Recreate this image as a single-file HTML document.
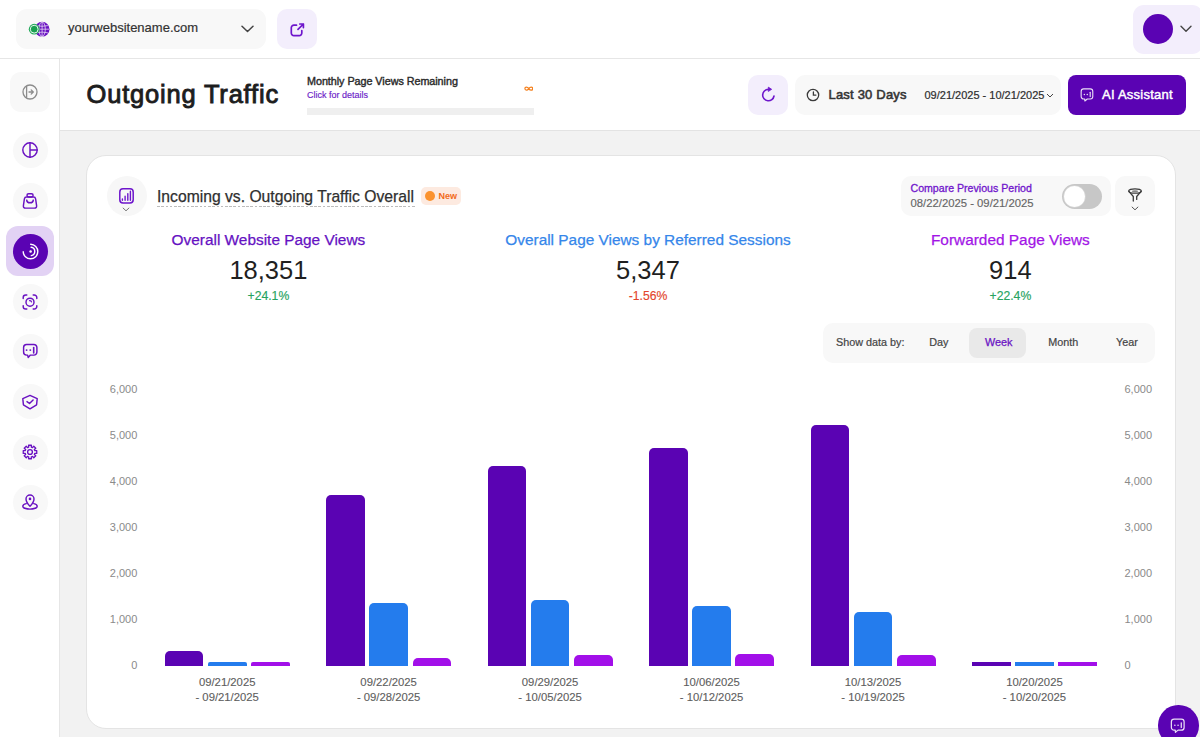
<!DOCTYPE html>
<html>
<head>
<meta charset="utf-8">
<style>
*{box-sizing:border-box;margin:0;padding:0}
html,body{width:1200px;height:737px;overflow:hidden;background:#f2f2f2;font-family:"Liberation Sans",sans-serif;color:#222}
.abs{position:absolute}
#top{position:absolute;left:0;top:0;width:1200px;height:59px;background:#fff;border-bottom:1px solid #e6e6e6}
#side{position:absolute;left:0;top:59px;width:60px;height:678px;background:#fff;border-right:1px solid #e6e6e6}
#ph{position:absolute;left:60px;top:59px;width:1140px;height:72px;background:#fff;border-bottom:1px solid #e3e3e3}
.sel{left:16px;top:9px;width:250px;height:40px;background:#f8f8f8;border-radius:11px}
.lbtn{background:#f3eefc;border-radius:10px}
.gbtn{background:#f8f8f8;border-radius:10px}
.sicon{position:absolute;left:12.5px;width:35px;height:35px;border-radius:50%;background:#f8f8f8}
.sicon svg{position:absolute;left:8.5px;top:8.5px}
#card{position:absolute;left:86px;top:155px;width:1090px;height:574px;background:#fff;border:1px solid #e4e4e4;border-radius:20px}
.t{position:absolute;white-space:nowrap;line-height:1}
.ylab{position:absolute;font-size:11px;color:#8a8a8a;line-height:1;white-space:nowrap}
.bar{position:absolute;border-radius:5px 5px 0 0}
.p{background:#5a03b3}.b{background:#247ced}.m{background:#a20fe9}
.xl{position:absolute;width:120px;text-align:center;font-size:11.3px;color:#5e5e5e;line-height:15px;-webkit-text-stroke:0.12px #5e5e5e}
</style>
</head>
<body>
<div id="top">
  <div class="abs sel">
    <svg class="abs" style="left:8px;top:11px" width="28" height="18" viewBox="0 0 28 18"><circle cx="18.1" cy="9.2" r="7.4" fill="#6a12c2"/><g stroke="#fff" stroke-width="0.75" fill="none" opacity="0.85"><ellipse cx="18.1" cy="9.2" rx="3.2" ry="7.2"/><line x1="18.1" y1="2" x2="18.1" y2="16.4"/><line x1="11.2" y1="9.2" x2="25" y2="9.2"/><path d="M12.3 5.6 Q18.1 7 23.9 5.6 M12.3 12.8 Q18.1 11.4 23.9 12.8"/></g><circle cx="10.2" cy="9.2" r="5.4" fill="#22a95a"/><circle cx="10.2" cy="9.2" r="3.9" fill="none" stroke="#e8f6ee" stroke-width="1"/><circle cx="10.2" cy="9.2" r="2.9" fill="#1a9f50"/></svg>
    <div class="t" style="left:52px;top:12px;font-size:13px;color:#333;-webkit-text-stroke:0.2px #333">yourwebsitename.com</div>
    <svg class="abs" style="left:225px;top:16px" width="13" height="8" viewBox="0 0 13 8"><path d="M1 1.2 L6.5 6.5 L12 1.2" stroke="#444" stroke-width="1.5" fill="none" stroke-linecap="round" stroke-linejoin="round"/></svg>
  </div>
  <div class="abs lbtn" style="left:277px;top:9px;width:40px;height:40px">
    <svg class="abs" style="left:12.5px;top:13.7px" width="15" height="14" viewBox="0 0 15 14"><path d="M6.5 2.2 H4 A2.6 2.6 0 0 0 1.3 4.8 V10 A2.6 2.6 0 0 0 4 12.7 H9.2 A2.6 2.6 0 0 0 11.8 10 V7.6 M8 6.3 L13.4 1 M9.8 1 H13.4 V4.6" stroke="#6e16cc" stroke-width="1.7" fill="none" stroke-linecap="round" stroke-linejoin="round"/></svg>
  </div>
  <div class="abs lbtn" style="left:1133px;top:5px;width:70px;height:49px;border-radius:11px">
    <div class="abs" style="left:10px;top:9px;width:30px;height:30px;border-radius:50%;background:#5a03b3"></div>
    <svg class="abs" style="left:47px;top:20px" width="12" height="8" viewBox="0 0 12 8"><path d="M1 1.3 L6 6.3 L11 1.3" stroke="#444" stroke-width="1.4" fill="none" stroke-linecap="round" stroke-linejoin="round"/></svg>
  </div>
</div>

<div id="side">
  <div class="abs gbtn" style="left:10px;top:13px;width:40px;height:40px;border-radius:11px">
    <svg class="abs" style="left:12px;top:12px" width="16" height="16" viewBox="0 0 16 16"><circle cx="8" cy="8" r="7" stroke="#8c8c8c" stroke-width="1.3" fill="none"/><path d="M4.6 1.9 V14.1" stroke="#8c8c8c" stroke-width="1.3"/><path d="M7 8 H11.2 M9.2 5.9 L11.3 8 L9.2 10.1" stroke="#8c8c8c" stroke-width="1.3" fill="none" stroke-linecap="round" stroke-linejoin="round"/></svg>
  </div>
  <div class="sicon" style="top:73.8px"><svg width="18" height="18" viewBox="0 0 18 18"><circle cx="9" cy="9" r="7.2" stroke="#6a12c2" stroke-width="1.45" fill="none" stroke-linecap="round" stroke-linejoin="round"/><path d="M9 1.8 V16.2 M9 9 H16.2" stroke="#6a12c2" stroke-width="1.45" fill="none" stroke-linecap="round" stroke-linejoin="round"/></svg></div>
  <div class="sicon" style="top:124.3px"><svg width="18" height="18" viewBox="0 0 18 18"><rect x="6" y="1.7" width="6.1" height="3.2" rx="1.6" stroke="#6a12c2" stroke-width="1.45" fill="none" stroke-linecap="round" stroke-linejoin="round"/><path d="M5.6 5 H12.5 Q14.3 5 14.6 6.8 L15.6 13.6 Q15.9 16.1 13.4 16.1 H4.6 Q2.1 16.1 2.4 13.6 L3.4 6.8 Q3.7 5 5.6 5 Z" stroke="#6a12c2" stroke-width="1.45" fill="none" stroke-linecap="round" stroke-linejoin="round"/><path d="M5.7 8.1 Q5.9 10.8 9 10.8 Q12.1 10.8 12.3 8.1" stroke="#6a12c2" stroke-width="1.45" fill="none" stroke-linecap="round" stroke-linejoin="round"/></svg></div>
  <div class="abs" style="left:6px;top:167px;width:48px;height:50px;border-radius:12px;background:#e2d2f4"></div>
  <div class="abs" style="left:12.5px;top:174.5px;width:35px;height:35px;border-radius:50%;background:#5a03b3">
    <svg class="abs" style="left:8px;top:8px" width="19" height="19" viewBox="0 0 19 19"><path d="M9.7 2.2 A7.3 7.3 0 1 1 2.2 9.7" stroke="#fff" stroke-width="1.4" fill="none" stroke-linecap="round"/><path d="M10.1 5.3 A4.2 4.2 0 0 1 10.3 13.6" stroke="#fff" stroke-width="1.4" fill="none" stroke-linecap="round"/><circle cx="9.6" cy="9.6" r="1.25" fill="#fff"/></svg>
  </div>
  <div class="sicon" style="top:225.2px"><svg width="18" height="18" viewBox="0 0 18 18"><path d="M2.2 5.4 V4.6 A2.6 2.6 0 0 1 4.8 2 H5.8 M12.2 2 H13.2 A2.6 2.6 0 0 1 15.8 4.6 V5.4 M15.8 12.6 V13.4 A2.6 2.6 0 0 1 13.2 16 H12.2 M5.8 16 H4.8 A2.6 2.6 0 0 1 2.2 13.4 V12.6" stroke="#6a12c2" stroke-width="1.45" fill="none" stroke-linecap="round" stroke-linejoin="round"/><circle cx="9" cy="9.2" r="4" stroke="#6a12c2" stroke-width="1.45" fill="none" stroke-linecap="round" stroke-linejoin="round"/><path d="M8.6 7.6 A1.7 1.7 0 0 1 10.5 8.9" stroke="#6a12c2" stroke-width="1.2" fill="none" stroke-linecap="round"/></svg></div>
  <div class="sicon" style="top:274.8px"><svg width="18" height="18" viewBox="0 0 18 18"><path d="M5.6 2.5 H12.9 A3 3 0 0 1 15.9 5.5 V10.1 A3 3 0 0 1 12.9 13.1 H9.4 L7.2 15.4 L6.6 13.1 H5.6 A3 3 0 0 1 2.6 10.1 V5.5 A3 3 0 0 1 5.6 2.5Z" stroke="#6a12c2" stroke-width="1.45" fill="none" stroke-linecap="round" stroke-linejoin="round"/><circle cx="5.6" cy="8.1" r="0.95" fill="#6a12c2"/><circle cx="9.3" cy="8.1" r="0.95" fill="#6a12c2"/><path d="M12.7 5.6 V10.9" stroke="#6a12c2" stroke-width="1.6" stroke-linecap="round"/></svg></div>
  <div class="sicon" style="top:325.3px"><svg width="18" height="18" viewBox="0 0 18 18"><path d="M9 2.4 L16.2 5.6 L15.6 11.8 L9 15.8 L2.4 11.8 L1.8 5.6 Z" stroke="#6a12c2" stroke-width="1.45" fill="none" stroke-linecap="round" stroke-linejoin="round"/><path d="M6 8.6 L8.5 10.5 L12.1 6.9" stroke="#6a12c2" stroke-width="1.45" fill="none" stroke-linecap="round" stroke-linejoin="round"/></svg></div>
  <div class="sicon" style="top:375.7px"><svg width="18" height="18" viewBox="0 0 18 18"><path d="M7.71 4.17 L7.57 2.25 L10.43 2.25 L10.29 4.17 L10.91 4.38 L11.50 4.67 L12.76 3.21 L14.79 5.24 L13.33 6.50 L13.62 7.09 L13.83 7.71 L15.75 7.57 L15.75 10.43 L13.83 10.29 L13.62 10.91 L13.33 11.50 L14.79 12.76 L12.76 14.79 L11.50 13.33 L10.91 13.62 L10.29 13.83 L10.43 15.75 L7.57 15.75 L7.71 13.83 L7.09 13.62 L6.50 13.33 L5.24 14.79 L3.21 12.76 L4.67 11.50 L4.38 10.91 L4.17 10.29 L2.25 10.43 L2.25 7.57 L4.17 7.71 L4.38 7.09 L4.67 6.50 L3.21 5.24 L5.24 3.21 L6.50 4.67 L7.09 4.38Z" stroke="#6a12c2" stroke-width="1.3" fill="none" stroke-linejoin="round"/><circle cx="9" cy="9" r="2.4" stroke="#6a12c2" stroke-width="1.35" fill="none"/></svg></div>
  <div class="sicon" style="top:425.9px"><svg width="18" height="18" viewBox="0 0 18 18"><path d="M9 13.3 C6.6 10.8 5 8.6 5 6 A4 4 0 0 1 13 6 C13 8.6 11.4 10.8 9 13.3Z" stroke="#6a12c2" stroke-width="1.45" fill="none" stroke-linecap="round" stroke-linejoin="round"/><circle cx="9" cy="5.9" r="1.3" fill="#6a12c2"/><path d="M5.2 10.6 C3.1 11.1 1.8 12 1.8 13.2 C1.8 14.8 5 16.1 9 16.1 C13 16.1 16.2 14.8 16.2 13.2 C16.2 12 14.9 11.1 12.8 10.6" stroke="#6a12c2" stroke-width="1.45" fill="none" stroke-linecap="round" stroke-linejoin="round"/></svg></div>
</div>

<div id="ph">
  <div class="t" style="left:26.6px;top:23px;font-size:25.5px;font-weight:400;color:#1d1d1d;-webkit-text-stroke:0.9px #1d1d1d;letter-spacing:0.8px">Outgoing Traffic</div>
  <div class="t" style="left:247px;top:17px;font-size:10.8px;font-weight:400;color:#2a2a2a;-webkit-text-stroke:0.4px #2a2a2a;letter-spacing:-0.05px">Monthly Page Views Remaining</div>
  <div class="t" style="left:247px;top:32px;font-size:9px;color:#6c1bc8;-webkit-text-stroke:0.15px #6c1bc8">Click for details</div>
  <svg class="abs" style="left:463.6px;top:26.8px" width="9.6" height="5.2" viewBox="0 0 11 6"><path d="M5.5 3 C4 0.6 1 0.6 1 3 C1 5.4 4 5.4 5.5 3 C7 0.6 10 0.6 10 3 C10 5.4 7 5.4 5.5 3Z" stroke="#f4811f" stroke-width="1.4" fill="none"/></svg>
  <div class="abs" style="left:247px;top:49.2px;width:226.5px;height:6.6px;background:#efefef"></div>

  <div class="abs lbtn" style="left:688px;top:16px;width:40px;height:40px">
    <svg class="abs" style="left:12px;top:11px" width="16" height="17" viewBox="0 0 16 17"><path d="M8.3 3.4 A5.7 5.7 0 1 0 14.0 10.0" stroke="#6e16cc" stroke-width="1.6" fill="none" stroke-linecap="round"/><path d="M8.3 1.1 L11.7 3.3 L8.3 5.5 Z" fill="#6e16cc" stroke="#6e16cc" stroke-width="0.7" stroke-linejoin="round"/></svg>
  </div>
  <div class="abs gbtn" style="left:735px;top:16px;width:266px;height:40px">
    <svg class="abs" style="left:11px;top:12.5px" width="14" height="14" viewBox="0 0 14 14"><circle cx="7" cy="7" r="5.7" stroke="#3a3a3a" stroke-width="1.3" fill="none"/><path d="M7.4 4 V7.1 H9.9" stroke="#3a3a3a" stroke-width="1.3" fill="none" stroke-linecap="round"/></svg>
    <div class="t" style="left:33.5px;top:12.8px;font-size:13px;color:#333;-webkit-text-stroke:0.55px #333;letter-spacing:0.2px">Last 30 Days</div>
    <div class="t" style="left:129.5px;top:15px;font-size:11px;color:#2e2e2e;-webkit-text-stroke:0.2px #2e2e2e">09/21/2025 - 10/21/2025</div>
    <svg class="abs" style="left:251px;top:18px" width="8" height="5" viewBox="0 0 8 5"><path d="M1 1 L4 4 L7 1" stroke="#444" stroke-width="1" fill="none"/></svg>
  </div>
  <div class="abs" style="left:1008px;top:15.5px;width:118px;height:40.5px;background:#5a03b3;border-radius:8px">
    <svg class="abs" style="left:10.5px;top:12.5px;opacity:0.88" width="15.5" height="15.5" viewBox="0 0 18 18"><path d="M5.4 2.2 H13.1 A2.9 2.9 0 0 1 16 5.1 V11 A2.9 2.9 0 0 1 13.1 13.9 H9.6 L6.8 16.2 L6.6 13.9 H5.4 A2.9 2.9 0 0 1 2.5 11 V5.1 A2.9 2.9 0 0 1 5.4 2.2Z" stroke="#fff" stroke-width="1.3" fill="none" stroke-linejoin="round"/><circle cx="6.2" cy="8.7" r="0.85" fill="#fff"/><circle cx="9.6" cy="8.7" r="0.85" fill="#fff"/><path d="M13 6.2 V11" stroke="#fff" stroke-width="1.3" stroke-linecap="round"/></svg>
    <div class="t" style="left:34px;top:13.1px;font-size:13px;color:#fff;-webkit-text-stroke:0.45px #fff;letter-spacing:0.25px">AI Assistant</div>
  </div>
</div>

<div id="card">
<div class="abs" style="left:20px;top:20px;width:40px;height:40px;border-radius:50%;background:#f7f7f7"><svg class="abs" style="left:12px;top:12px" width="15" height="16" viewBox="0 0 15 16"><rect x="0.8" y="0.8" width="13.4" height="14.2" rx="3.2" stroke="#6e16cc" stroke-width="1.5" fill="none"/><path d="M3.4 12.3 V11 M6.1 12.3 V8.3 M8.8 12.3 V5.6 M11.4 12.3 V3.2" stroke="#6e16cc" stroke-width="1.4" stroke-linecap="round"/></svg><svg class="abs" style="left:15px;top:30.5px" width="8" height="5" viewBox="0 0 8 5"><path d="M0.8 0.8 L4 3.8 L7.2 0.8" stroke="#777" stroke-width="1" fill="none"/></svg></div>
<div class="t" style="left:70px;top:32.81px;font-size:15.7px;color:#2f2f2f;-webkit-text-stroke:0.25px #2f2f2f">Incoming vs. Outgoing Traffic Overall</div>
<div class="abs" style="left:69.5px;top:50px;width:258px;height:1px;background:repeating-linear-gradient(90deg,#bcbcbc 0 2.6px,transparent 2.6px 4.25px)"></div>
<div class="abs" style="left:334px;top:31px;width:40px;height:18px;border-radius:5px;background:#fdeae0"><div class="abs" style="left:3.5px;top:4px;width:10px;height:10px;border-radius:50%;background:#fb932f"></div><div class="t" style="left:17.5px;top:4.78px;font-size:9px;font-weight:700;color:#f26a1b">New</div></div>
<div class="abs" style="left:814px;top:20px;width:210px;height:40px;border-radius:10px;background:#f8f8f8"><div class="t" style="left:9.5px;top:6.73px;font-size:10.6px;color:#7015cc;-webkit-text-stroke:0.3px #7015cc">Compare Previous Period</div><div class="t" style="left:9.5px;top:21.73px;font-size:11.3px;color:#666;-webkit-text-stroke:0.15px #666">08/22/2025 - 09/21/2025</div><div class="abs" style="left:160.5px;top:7.5px;width:40px;height:25px;border-radius:13px;background:#c7c7c7"><div class="abs" style="left:2px;top:2px;width:21px;height:21px;border-radius:50%;background:#fff;box-shadow:0 0 0 0.6px #d9d9d9"></div></div></div>
<div class="abs" style="left:1028px;top:20px;width:40px;height:40px;border-radius:10px;background:#f8f8f8"><svg class="abs" style="left:12px;top:12px" width="16" height="14" viewBox="0 0 16 14"><ellipse cx="8" cy="3" rx="6.3" ry="2.2" stroke="#3a3a3a" stroke-width="1.3" fill="none"/><path d="M1.9 3.4 L6.3 8.5 V13 M14.1 3.4 L9.7 8.5 V11.4" stroke="#3a3a3a" stroke-width="1.3" fill="none" stroke-linecap="round" stroke-linejoin="round"/><ellipse cx="8" cy="3.2" rx="3.2" ry="0.9" fill="#888"/></svg><svg class="abs" style="left:16px;top:30px" width="8" height="5" viewBox="0 0 8 5"><path d="M0.8 0.8 L4 3.8 L7.2 0.8" stroke="#555" stroke-width="1" fill="none"/></svg></div>
<div class="t" style="left:-18.6px;width:400px;text-align:center;top:75.56px;font-size:15.4px;color:#6511c2;-webkit-text-stroke:0.25px #6511c2">Overall Website Page Views</div>
<div class="t" style="left:-18.6px;width:400px;text-align:center;top:102.21px;font-size:25.5px;color:#1f1f1f">18,351</div>
<div class="t" style="left:-18.6px;width:400px;text-align:center;top:134.07px;font-size:12.2px;color:#27a35e;-webkit-text-stroke:0.15px #27a35e">+24.1%</div>
<div class="t" style="left:361px;width:400px;text-align:center;top:75.56px;font-size:15.4px;color:#3586ea;-webkit-text-stroke:0.25px #3586ea">Overall Page Views by Referred Sessions</div>
<div class="t" style="left:361px;width:400px;text-align:center;top:102.21px;font-size:25.5px;color:#1f1f1f">5,347</div>
<div class="t" style="left:361px;width:400px;text-align:center;top:134.07px;font-size:12.2px;color:#e3452c;-webkit-text-stroke:0.15px #e3452c">-1.56%</div>
<div class="t" style="left:723.4px;width:400px;text-align:center;top:75.56px;font-size:15.4px;color:#a215e6;-webkit-text-stroke:0.25px #a215e6">Forwarded Page Views</div>
<div class="t" style="left:723.4px;width:400px;text-align:center;top:102.21px;font-size:25.5px;color:#1f1f1f">914</div>
<div class="t" style="left:723.4px;width:400px;text-align:center;top:134.07px;font-size:12.2px;color:#27a35e;-webkit-text-stroke:0.15px #27a35e">+22.4%</div>
<div class="abs" style="left:736px;top:166.5px;width:332px;height:40px;border-radius:10px;background:#f8f8f8"><div class="abs" style="left:146px;top:5px;width:57px;height:30px;border-radius:8px;background:#e9e9e9"></div><div class="t" style="left:13px;top:14.36px;font-size:10.8px;color:#444;-webkit-text-stroke:0.2px #444">Show data by:</div><div class="t" style="left:106.29999999999995px;top:14.36px;font-size:10.8px;color:#444;-webkit-text-stroke:0.2px #444">Day</div><div class="t" style="left:162px;top:14.36px;font-size:10.8px;color:#6a12c4;-webkit-text-stroke:0.25px #6a12c4">Week</div><div class="t" style="left:225.29999999999995px;top:14.36px;font-size:10.8px;color:#444;-webkit-text-stroke:0.2px #444">Month</div><div class="t" style="left:293px;top:14.36px;font-size:10.8px;color:#444;-webkit-text-stroke:0.2px #444">Year</div></div>
<div class="ylab" style="left:-49.7px;width:100px;text-align:right;top:227.63px">6,000</div>
<div class="ylab" style="left:1037.5px;top:227.63px">6,000</div>
<div class="ylab" style="left:-49.7px;width:100px;text-align:right;top:273.63px">5,000</div>
<div class="ylab" style="left:1037.5px;top:273.63px">5,000</div>
<div class="ylab" style="left:-49.7px;width:100px;text-align:right;top:319.63px">4,000</div>
<div class="ylab" style="left:1037.5px;top:319.63px">4,000</div>
<div class="ylab" style="left:-49.7px;width:100px;text-align:right;top:365.63px">3,000</div>
<div class="ylab" style="left:1037.5px;top:365.63px">3,000</div>
<div class="ylab" style="left:-49.7px;width:100px;text-align:right;top:411.63px">2,000</div>
<div class="ylab" style="left:1037.5px;top:411.63px">2,000</div>
<div class="ylab" style="left:-49.7px;width:100px;text-align:right;top:457.63px">1,000</div>
<div class="ylab" style="left:1037.5px;top:457.63px">1,000</div>
<div class="ylab" style="left:-49.7px;width:100px;text-align:right;top:503.63px">0</div>
<div class="ylab" style="left:1037.5px;top:503.63px">0</div>
<div class="bar p" style="left:77.7px;top:494.8px;width:38.7px;height:15.3px;border-radius:5px 5px 0 0"></div>
<div class="bar b" style="left:120.9px;top:505.6px;width:38.7px;height:4.5px;border-radius:2px 2px 0 0"></div>
<div class="bar m" style="left:164.1px;top:506px;width:38.7px;height:4.1px;border-radius:2px 2px 0 0"></div>
<div class="xl" style="left:80.2px;top:519.2px">09/21/2025<br>- 09/21/2025</div>
<div class="bar p" style="left:239.15px;top:339px;width:38.7px;height:171.1px;border-radius:5px 5px 0 0"></div>
<div class="bar b" style="left:282.35px;top:447.3px;width:38.7px;height:62.8px;border-radius:5px 5px 0 0"></div>
<div class="bar m" style="left:325.55px;top:502px;width:38.7px;height:8.1px;border-radius:5px 5px 0 0"></div>
<div class="xl" style="left:241.65px;top:519.2px">09/22/2025<br>- 09/28/2025</div>
<div class="bar p" style="left:400.6px;top:310px;width:38.7px;height:200.1px;border-radius:5px 5px 0 0"></div>
<div class="bar b" style="left:443.8px;top:444.4px;width:38.7px;height:65.7px;border-radius:5px 5px 0 0"></div>
<div class="bar m" style="left:487.0px;top:498.8px;width:38.7px;height:11.3px;border-radius:5px 5px 0 0"></div>
<div class="xl" style="left:403.1px;top:519.2px">09/29/2025<br>- 10/05/2025</div>
<div class="bar p" style="left:562.05px;top:292px;width:38.7px;height:218.1px;border-radius:5px 5px 0 0"></div>
<div class="bar b" style="left:605.25px;top:449.6px;width:38.7px;height:60.5px;border-radius:5px 5px 0 0"></div>
<div class="bar m" style="left:648.45px;top:497.6px;width:38.7px;height:12.5px;border-radius:5px 5px 0 0"></div>
<div class="xl" style="left:564.55px;top:519.2px">10/06/2025<br>- 10/12/2025</div>
<div class="bar p" style="left:723.5px;top:268.8px;width:38.7px;height:241.3px;border-radius:5px 5px 0 0"></div>
<div class="bar b" style="left:766.7px;top:456.4px;width:38.7px;height:53.7px;border-radius:5px 5px 0 0"></div>
<div class="bar m" style="left:809.9px;top:499.2px;width:38.7px;height:10.9px;border-radius:5px 5px 0 0"></div>
<div class="xl" style="left:726.0px;top:519.2px">10/13/2025<br>- 10/19/2025</div>
<div class="bar p" style="left:884.95px;top:505.9px;width:38.7px;height:4.2px;border-radius:0"></div>
<div class="bar b" style="left:928.15px;top:505.9px;width:38.7px;height:4.2px;border-radius:0"></div>
<div class="bar m" style="left:971.35px;top:505.9px;width:38.7px;height:4.2px;border-radius:0"></div>
<div class="xl" style="left:887.45px;top:519.2px">10/20/2025<br>- 10/20/2025</div>
</div>
<div class="abs" style="left:1158px;top:705px;width:40.5px;height:40.5px;border-radius:50%;background:#5a03b3"><svg class="abs" style="left:11px;top:11.5px;opacity:0.88" width="17" height="17" viewBox="0 0 18 18"><path d="M5.4 2.2 H13.1 A2.9 2.9 0 0 1 16 5.1 V11 A2.9 2.9 0 0 1 13.1 13.9 H9.6 L6.8 16.2 L6.6 13.9 H5.4 A2.9 2.9 0 0 1 2.5 11 V5.1 A2.9 2.9 0 0 1 5.4 2.2Z" stroke="#fff" stroke-width="1.3" fill="none" stroke-linejoin="round"/><circle cx="6.2" cy="8.7" r="0.85" fill="#fff"/><circle cx="9.6" cy="8.7" r="0.85" fill="#fff"/><path d="M13 6.2 V11" stroke="#fff" stroke-width="1.3" stroke-linecap="round"/></svg></div>

</body>
</html>
